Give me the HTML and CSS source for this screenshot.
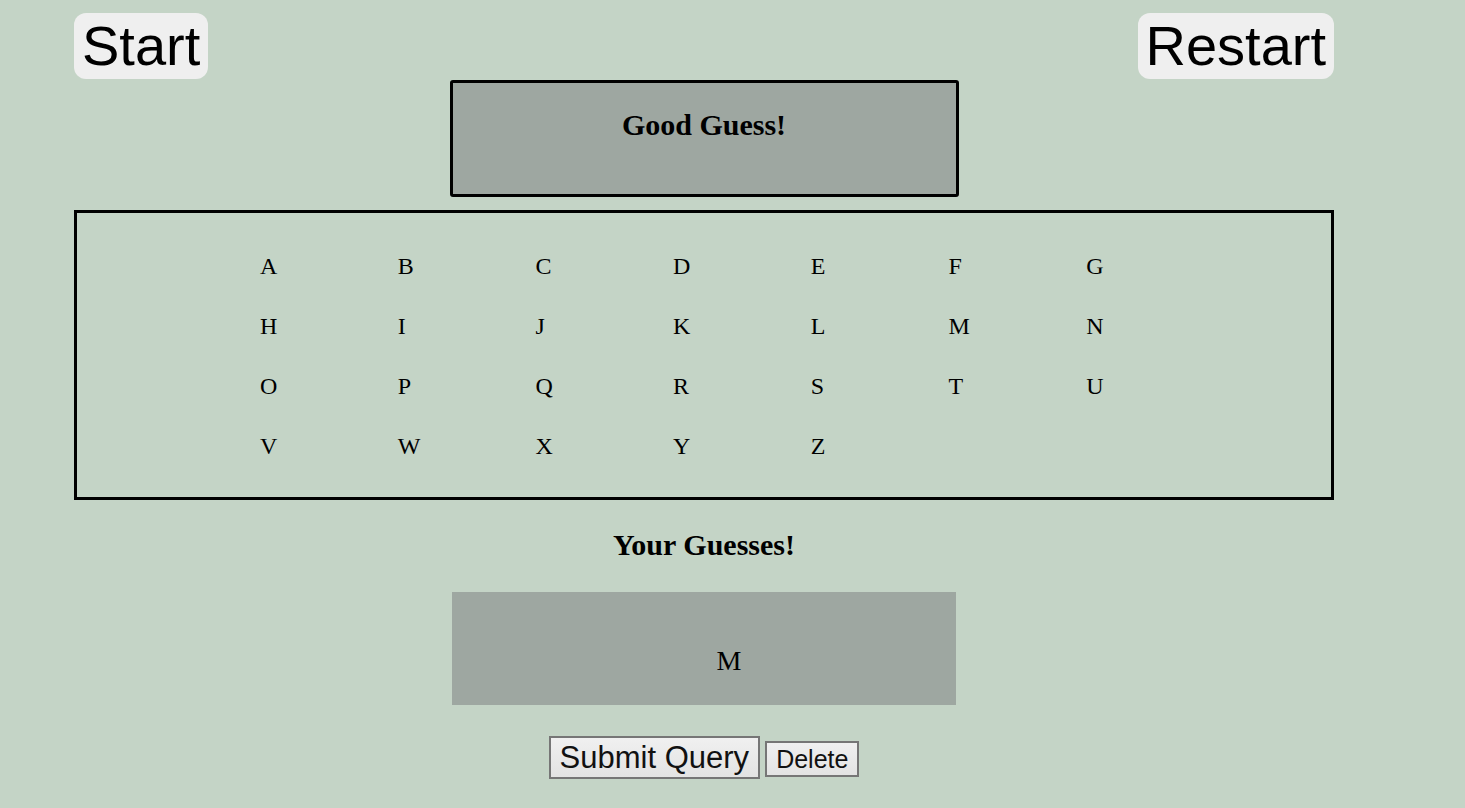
FILE: index.html
```html
<!DOCTYPE html>
<html>
<head>
<meta charset="utf-8">
<title>Word Guess</title>
<link rel="stylesheet" href="styles.css">
</head>
<body>
<div class="wrap">
  <div class="topbar">
    <button class="big-btn">Start</button>
    <button class="big-btn">Restart</button>
  </div>
  <div class="message">Good Guess!</div>
  <div class="letters">
    <div class="grid">
      <span>A</span><span>B</span><span>C</span><span>D</span><span>E</span><span>F</span><span>G</span>
      <span>H</span><span>I</span><span>J</span><span>K</span><span>L</span><span>M</span><span>N</span>
      <span>O</span><span>P</span><span>Q</span><span>R</span><span>S</span><span>T</span><span>U</span>
      <span>V</span><span>W</span><span>X</span><span>Y</span><span>Z</span>
    </div>
  </div>
  <div class="guess-title">Your Guesses!</div>
  <div class="guesses">M</div>
  <div class="actions">
    <button class="submit">Submit Query</button>
    <button class="delete">Delete</button>
  </div>
</div>
</body>
</html>
```
FILE: styles.css
```css
html, body {
  margin: 0;
  padding: 0;
  background: #c4d4c6;
}
body {
  font-family: "Liberation Serif", "Times New Roman", serif;
  color: #000;
}
.wrap {
  width: 1260px;
  margin-left: 74px;
  padding-top: 13px;
}
.topbar {
  display: flex;
  justify-content: space-between;
  align-items: flex-start;
}
.big-btn {
  font-family: "Liberation Sans", Arial, sans-serif;
  font-size: 56px;
  line-height: 64px;
  height: 66px;
  padding: 1px 8px;
  border: none;
  border-radius: 12px;
  background: #efefef;
  color: #000;
}
.message {
  width: 503px;
  height: 86px;
  margin: 1px auto 0;
  border: 3px solid #000;
  border-radius: 3px;
  background: #9ea7a1;
  text-align: center;
  font-weight: bold;
  font-size: 30px;
  line-height: 34px;
  padding-top: 25px;
  box-sizing: content-box;
}
.letters {
  margin-top: 13px;
  height: 284px;
  border: 3px solid #000;
  box-sizing: content-box;
}
.grid {
  display: grid;
  grid-template-columns: repeat(7, 137.7px);
  grid-auto-rows: 60px;
  padding: 23px 0 0 183px;
  font-size: 24px;
}
.grid span {
  line-height: 60px;
}
.guess-title {
  margin-top: 29px;
  height: 32px;
  line-height: 32px;
  text-align: center;
  font-weight: bold;
  font-size: 30px;
}
.guesses {
  width: 504px;
  height: 113px;
  margin: 31px auto 0;
  background: #9ea7a1;
  box-sizing: border-box;
  padding: 53px 0 0 50px;
  text-align: center;
  font-size: 28px;
  line-height: 32px;
}
.actions {
  display: flex;
  justify-content: center;
  align-items: baseline;
  gap: 5px;
  margin-top: 31px;
}
.actions button {
  font-family: "Liberation Sans", Arial, sans-serif;
  color: #111;
  background: linear-gradient(#f0f0f0, #e3e3e3);
  border: 2px solid #767676;
}
.submit {
  font-size: 31px;
  height: 43px;
  padding: 1px 9px;
}
.delete {
  font-size: 25px;
  height: 36px;
  padding: 1px 9px;
}
```
